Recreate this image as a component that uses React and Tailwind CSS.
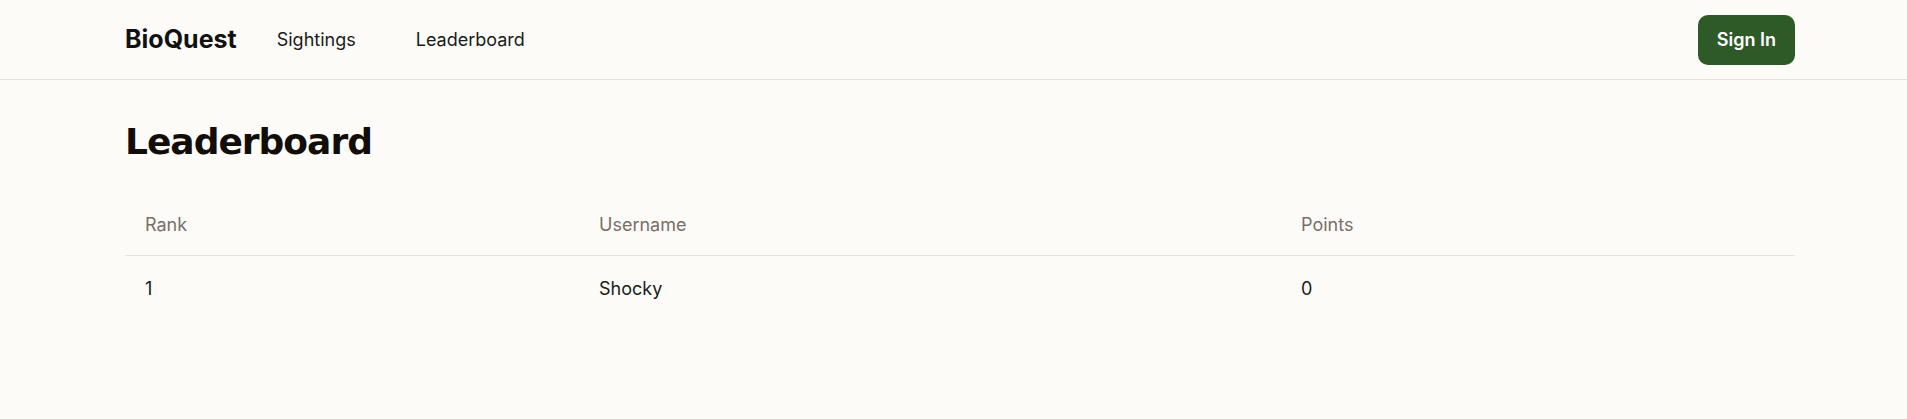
export default function App() {
  const rows = [{ rank: 1, username: 'Shocky', points: 0 }];

  return (
    <div className="min-h-screen bg-[#fcfbf8] font-['Inter',sans-serif] text-[#1a1a1a]">
      {/* header */}
      <header className="border-b border-[#e6e3de]">
        <div className="h-[79px] pl-[125px] pr-[112px] flex items-center">
          <span className="text-[25px] font-bold text-[#111] leading-none">BioQuest</span>
          <nav className="ml-5 flex items-center gap-5 text-[18px]">
            <a className="px-5">Sightings</a>
            <a className="px-5">Leaderboard</a>
          </nav>
          <button className="ml-auto h-[50px] px-[19px] rounded-[10px] bg-[#2e5a28] text-white text-[18px] font-semibold">
            Sign In
          </button>
        </div>
      </header>

      {/* main */}
      <main className="pl-[125px] pr-[112px] pt-[42px]">
        <h1 className="mb-[33px] text-[36px] leading-[40px] font-bold tracking-[-1px] text-[#120d08] font-['DejaVu_Sans',sans-serif]">
          Leaderboard
        </h1>
        <div className="text-[18px] leading-7">
          <div className="grid grid-cols-[454px_702px_1fr] border-b border-[#e6e3de] text-[#7a6f68]">
            <div className="px-5 py-4">Rank</div>
            <div className="px-5 py-4">Username</div>
            <div className="px-5 py-4">Points</div>
          </div>
          {rows.map((r) => (
            <div key={r.rank} className="grid grid-cols-[454px_702px_1fr]">
              <div className="px-5 pt-[19px] pb-[18px]">{r.rank}</div>
              <div className="px-5 pt-[19px] pb-[18px]">{r.username}</div>
              <div className="px-5 pt-[19px] pb-[18px]">{r.points}</div>
            </div>
          ))}
        </div>
      </main>
    </div>
  );
}
